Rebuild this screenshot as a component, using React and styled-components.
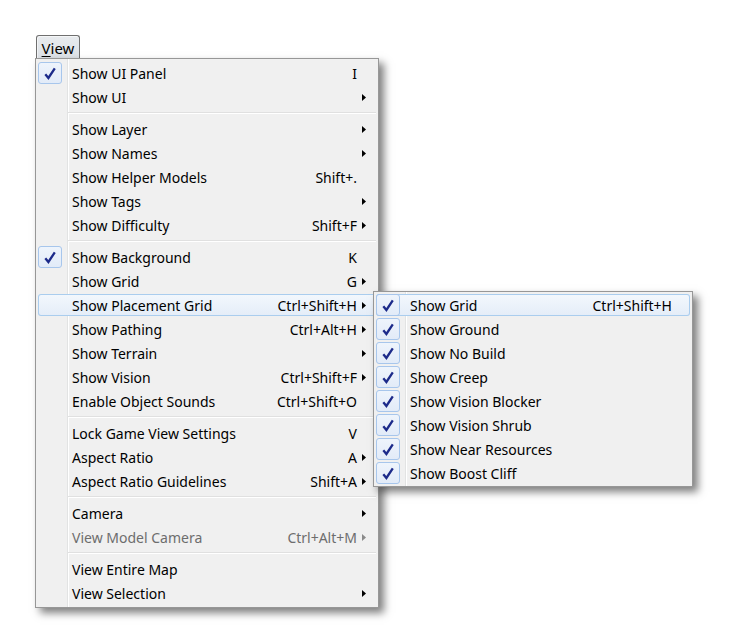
import React from 'react';
import styled, { createGlobalStyle, css } from 'styled-components';

const Global = createGlobalStyle`
  html, body { margin: 0; padding: 0; background: #ffffff; }
  body { font-family: "Noto Sans", "Open Sans", sans-serif; font-size: 14px; color: #000; }
`;

const Page = styled.div`
  padding: 35px 0 0 35px;
  width: 729px;
  height: 643px;
  box-sizing: border-box;
`;

const MenuBarButton = styled.div`
  display: inline-flex;
  align-items: center;
  justify-content: center;
  vertical-align: top;
  margin-left: 1px;
  width: 44px;
  height: 23px;
  box-sizing: border-box;
  border: 1px solid #6f6f6f;
  border-bottom: none;
  border-radius: 3px 3px 0 0;
  background: linear-gradient(#e8ebee, #dde1e6);
  box-shadow: inset 1px 1px 0 rgba(255,255,255,0.55);
  font-size: 15px;
  padding-top: 1px;
  u { text-decoration: underline; text-underline-offset: 2px; text-decoration-thickness: 1px; }
`;

const BarRow = styled.div`
  display: flex;
  height: 23px;
`;

const Menu = styled.div`
  position: relative;
  display: flex;
  flex-direction: column;
  box-sizing: border-box;
  width: ${p => p.$width}px;
  padding: ${p => p.$pad};
  border: 1px solid #979797;
  background:
    linear-gradient(to right,
      transparent 31px, #e2e3e3 31px, #e2e3e3 32px,
      #ffffff 32px, #ffffff 33px, transparent 33px) no-repeat,
    #f0f0f0;
  background-clip: padding-box;
  box-shadow: 5px 5px 8px rgba(0,0,0,0.5);
`;

const MainMenu = styled(Menu)``;

const SubMenu = styled(Menu)`
  position: absolute;
  top: -3px;
  left: calc(100% - 3px);
  z-index: 2;
`;

const Item = styled.div`
  position: relative;
  display: flex;
  align-items: center;
  flex: none;
  height: 22px;
  margin: 1px 0;
  border-radius: 3px;
  color: ${p => (p.$disabled ? '#6d6d6d' : '#000')};
  ${p => p.$active && css`
    background: linear-gradient(#f3f8fd, #e4edf8);
    box-shadow: inset 0 0 0 1px #aacdee;
  `}
`;

const Gutter = styled.div`
  flex: none;
  width: 24px;
  height: 22px;
  margin-right: 10px;
  box-sizing: border-box;
  display: flex;
  align-items: center;
  justify-content: center;
  ${p => p.$checked && css`
    border: 1px solid #a7c6ec;
    border-radius: 3px;
    background: linear-gradient(#eef4fc, #e2ebf8);
  `}
`;

const Label = styled.span`
  flex: 1;
  white-space: nowrap;
  line-height: 20px;
  padding-top: 2px;
`;

const Shortcut = styled.span`
  flex: none;
  white-space: nowrap;
  line-height: 20px;
  padding-top: 2px;
`;

const ArrowCell = styled.span`
  flex: none;
  width: ${p => p.$w}px;
  display: flex;
  align-items: center;
  padding-left: 5px;
  box-sizing: border-box;
`;

const Separator = styled.div`
  flex: none;
  height: 1px;
  background: #e0e0e0;
  border-bottom: 1px solid #ffffff;
  margin: 3px 0 3px 30px;
`;

const Check = () => (
  <svg width="12" height="13" viewBox="0 0 12 13">
    <path d="M1.3 7.2 L4.4 11 L10.8 1.3" fill="none" stroke="#1c2a8a" strokeWidth="2.3" strokeLinejoin="miter" strokeLinecap="butt" />
  </svg>
);

const Arrow = ({ color }) => (
  <svg width="4" height="7" viewBox="0 0 4 7">
    <polygon points="0,0 4,3.5 0,7" fill={color} />
  </svg>
);

const subItems = [
  { label: 'Show Grid', checked: true, shortcut: 'Ctrl+Shift+H', active: true },
  { label: 'Show Ground', checked: true },
  { label: 'Show No Build', checked: true },
  { label: 'Show Creep', checked: true },
  { label: 'Show Vision Blocker', checked: true },
  { label: 'Show Vision Shrub', checked: true },
  { label: 'Show Near Resources', checked: true },
  { label: 'Show Boost Cliff', checked: true },
];

const groups = [
  [
    { label: 'Show UI Panel', checked: true, shortcut: 'I' },
    { label: 'Show UI', sub: true },
  ],
  [
    { label: 'Show Layer', sub: true },
    { label: 'Show Names', sub: true },
    { label: 'Show Helper Models', shortcut: 'Shift+.' },
    { label: 'Show Tags', sub: true },
    { label: 'Show Difficulty', shortcut: 'Shift+F', sub: true },
  ],
  [
    { label: 'Show Background', checked: true, shortcut: 'K' },
    { label: 'Show Grid', shortcut: 'G', sub: true },
    { label: 'Show Placement Grid', shortcut: 'Ctrl+Shift+H', sub: true, active: true, children: subItems },
    { label: 'Show Pathing', shortcut: 'Ctrl+Alt+H', sub: true },
    { label: 'Show Terrain', sub: true },
    { label: 'Show Vision', shortcut: 'Ctrl+Shift+F', sub: true },
    { label: 'Enable Object Sounds', shortcut: 'Ctrl+Shift+O' },
  ],
  [
    { label: 'Lock Game View Settings', shortcut: 'V' },
    { label: 'Aspect Ratio', shortcut: 'A', sub: true },
    { label: 'Aspect Ratio Guidelines', shortcut: 'Shift+A', sub: true },
  ],
  [
    { label: 'Camera', sub: true },
    { label: 'View Model Camera', shortcut: 'Ctrl+Alt+M', sub: true, disabled: true },
  ],
  [
    { label: 'View Entire Map' },
    { label: 'View Selection', sub: true },
  ],
];

const MenuItem = ({ item, arrowW }) => (
  <Item $active={item.active} $disabled={item.disabled}>
    <Gutter $checked={item.checked}>{item.checked && <Check />}</Gutter>
    <Label>{item.label}</Label>
    {item.shortcut && <Shortcut>{item.shortcut}</Shortcut>}
    <ArrowCell $w={arrowW}>
      {item.sub && <Arrow color={item.disabled ? '#8a8a8a' : '#000'} />}
    </ArrowCell>
    {item.children && (
      <SubMenu $width={320} $pad="1px 2px">
        {item.children.map(c => (
          <MenuItem key={c.label} item={c} arrowW={18} />
        ))}
      </SubMenu>
    )}
  </Item>
);

export default function App() {
  return (
    <Page>
      <Global />
      <BarRow>
        <MenuBarButton>
          <span><u>V</u>iew</span>
        </MenuBarButton>
      </BarRow>
      <MainMenu $width={344} $pad="2px 2px">
        {groups.map((g, gi) => (
          <React.Fragment key={gi}>
            {gi > 0 && <Separator />}
            {g.map(it => (
              <MenuItem key={it.label} item={it} arrowW={19} />
            ))}
          </React.Fragment>
        ))}
      </MainMenu>
    </Page>
  );
}
